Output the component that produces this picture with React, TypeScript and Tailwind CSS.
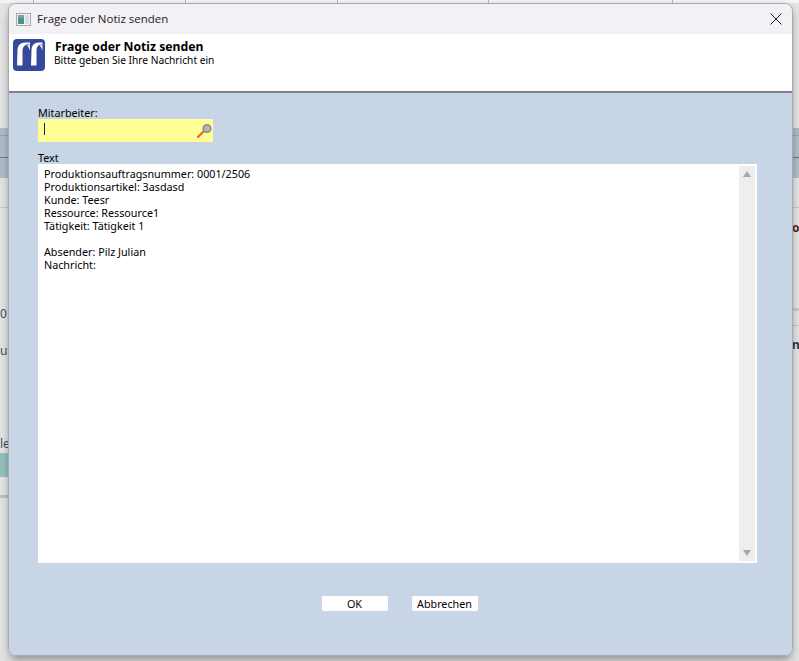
import React from 'react';

// Magnifier shown at the right end of the employee field
function SearchIcon() {
  return (
    <svg width="17" height="16" viewBox="0 0 17 16" className="block">
      <line x1="2" y1="14" x2="7.500" y2="8.500" stroke="#e2703a" strokeWidth="2.4" strokeLinecap="round" />
      <circle cx="11" cy="5.500" r="3.800" fill="#b4b6b8" stroke="#8a8c8c" strokeWidth="1.600" />
    </svg>
  );
}

function Logo() {
  return (
    <svg width="32" height="32" viewBox="0 0 32 32" className="block">
      <rect width="32" height="32" rx="4" fill="#36499a" />
      <path d="M4 26.500L4.500 11C4.500 6.500 7.500 3.500 12 3.500H17V5C12.500 5 9.500 7.500 9.500 12V26.500Z" fill="#ffffff" />
      <path d="M18 26.500L18.500 11C18.500 6.500 21.500 3.500 25.500 3.500H29.500V5C26 5 23.500 7.500 23.500 12V26.500Z" fill="#ffffff" />
      <path d="M14 6L17 5V11.500C16 9.500 15 7.500 14 6Z" fill="#dfe3f2" />
      <path d="M26.500 6L29.500 5V11.500C28.500 9.500 27.500 7.500 26.500 6Z" fill="#dfe3f2" />
    </svg>
  );
}

function WindowIcon() {
  return (
    <svg width="15" height="13" viewBox="0 0 15 13" className="block">
      <rect x="0.500" y="0.500" width="14" height="12" fill="#f4f4f4" stroke="#a8a8a8" />
      <rect x="2" y="2" width="6" height="9" fill="#4d9486" />
      <rect x="2" y="2" width="6" height="3" fill="#7f9cc0" />
      <rect x="9" y="2" width="4" height="9" fill="#d3dbe4" />
    </svg>
  );
}

const messageLines = [
  'Produktionsauftragsnummer: 0001/2506',
  'Produktionsartikel: 3asdasd',
  'Kunde: Teesr',
  'Ressource: Ressource1',
  'Tätigkeit: Tätigkeit 1',
  '\u00a0',
  'Absender: Pilz Julian',
  'Nachricht:',
];

export default function App() {
  return (
    <div className="relative h-[661px] w-[799px] overflow-hidden bg-[#e2e2e2] font-['Noto_Sans',sans-serif] text-[10.75px] text-black">
      {/* Dimmed application behind the dialog */}
      <div className="absolute inset-x-0 top-0 h-[3px] bg-[#f4f4f4]">
        <div className="absolute left-[33px] top-0 h-[3px] w-px bg-[#b5b5b5]" />
        <div className="absolute left-[185px] top-0 h-[3px] w-px bg-[#b5b5b5]" />
        <div className="absolute left-[337px] top-0 h-[3px] w-px bg-[#b5b5b5]" />
        <div className="absolute left-[488px] top-0 h-[3px] w-px bg-[#b5b5b5]" />
        <div className="absolute left-[672px] top-0 h-[3px] w-px bg-[#b5b5b5]" />
      </div>
      <div className="absolute left-0 top-[128px] h-[50px] w-[8px] bg-[#b1bac8]">
        <div className="mt-[7px] h-px bg-[#9aa3b0]" />
        <div className="mt-[21px] h-px bg-[#6f7680]" />
      </div>
      <div className="absolute right-0 top-[128px] h-[50px] w-[7px] bg-[#b1bac8]">
        <div className="mt-[7px] h-px bg-[#9aa3b0]" />
        <div className="mt-[21px] h-px bg-[#6f7680]" />
      </div>
      <div className="absolute left-0 top-[207px] h-px w-[8px] bg-[#c6c6c6]" />
      <div className="absolute right-0 top-[207px] h-px w-[7px] bg-[#c6c6c6]" />
      <div className="absolute right-0 top-[308px] h-[3px] w-[7px] bg-[#c8c8c8]" />
      <div className="absolute right-0 top-[325px] h-px w-[7px] bg-[#c6c6c6]" />
      <div className="absolute left-0 top-[306px] text-[12px] leading-[16px] text-[#3a4c6a]">0</div>
      <div className="absolute left-0 top-[343px] w-[8px] overflow-hidden text-right text-[12px] leading-[16px] text-[#3a4c6a]">ut</div>
      <div className="absolute left-0 top-[436px] w-[8px] overflow-hidden text-right text-[12px] leading-[16px] text-[#3a4c6a]">le</div>
      <div className="absolute left-0 top-[453px] h-[24px] w-[8px] bg-[#93c0bf]" />
      <div className="absolute left-0 top-[495px] h-[3px] w-[8px] bg-[#c0c0c0]" />
      <div className="absolute right-0 top-[220px] w-[7px] overflow-hidden text-[12px] font-bold leading-[16px] text-[#5a2020]">or</div>
      <div className="absolute right-0 top-[337px] w-[7px] overflow-hidden text-[12px] font-bold leading-[16px] text-[#33333a]">nt</div>

      {/* Dialog window */}
      <div className="absolute left-[8px] top-[3px] flex h-[653px] w-[785px] flex-col overflow-hidden rounded-[8px] border border-[#aaaaaa] shadow-[0_7px_10px_-2px_rgba(0,0,0,0.3),0_0_5px_rgba(0,0,0,0.1)]">
        <div className="flex h-[30px] shrink-0 items-center bg-[#f3f1f5] pl-[7px] pr-[7px]">
          <WindowIcon />
          <span className="ml-[6px] font-['Open_Sans',sans-serif] text-[11.5px] text-[#1c1c1c]">Frage oder Notiz senden</span>
          <svg width="12" height="12" viewBox="0 0 12 12" className="ml-auto mr-[3px] block">
            <path d="M0.500 0.500L11.500 11.500M11.500 0.500L0.500 11.500" stroke="#222222" strokeWidth="1" />
          </svg>
        </div>

        <div className="flex h-[59px] shrink-0 border-b-[2px] border-b-[#7f848c] bg-white pl-[4px] pt-[5px]">
          <Logo />
          <div className="ml-[10px]">
            <div className="text-[12.2px] font-bold leading-[15px]">Frage oder Notiz senden</div>
            <div className="-ml-px text-[10.2px] leading-[13px]">Bitte geben Sie Ihre Nachricht ein</div>
          </div>
        </div>

        <div className="flex flex-1 flex-col bg-[#c8d5e6] pl-[29px] pr-[35px] pt-[14px]">
          <div className="leading-[12px]">Mitarbeiter:</div>
          <div className="flex h-[23px] w-[175px] items-center justify-between bg-[#ffff96] pl-[6px]">
            <div className="-mt-[3px] h-[12px] w-px bg-[#10206a]" />
            <SearchIcon />
          </div>
          <div className="mt-[10px] leading-[12px]">Text</div>
          <div className="flex h-[399px] justify-between bg-white py-[2px] pl-[6px] pr-[2px]">
            <div className="pt-[2px] leading-[13px]">
              {messageLines.map((line, i) => (
                <div key={i}>{line}</div>
              ))}
            </div>
            <div className="flex w-[16px] flex-col items-center justify-between bg-[#eeeeee] py-[5px]">
              <div className="h-0 w-0 border-x-[4px] border-b-[6px] border-x-transparent border-b-[#a8a8a8]" />
              <div className="h-0 w-0 border-x-[4px] border-t-[6px] border-x-transparent border-t-[#a8a8a8]" />
            </div>
          </div>
          <div className="mt-[33px] flex justify-center gap-[24px] pl-[4px]">
            <button className="h-[15px] w-[66px] rounded-[2px] bg-white pt-px leading-[14px]">OK</button>
            <button className="h-[15px] w-[66px] rounded-[2px] bg-white pt-px leading-[14px]">Abbrechen</button>
          </div>
        </div>
      </div>
    </div>
  );
}
